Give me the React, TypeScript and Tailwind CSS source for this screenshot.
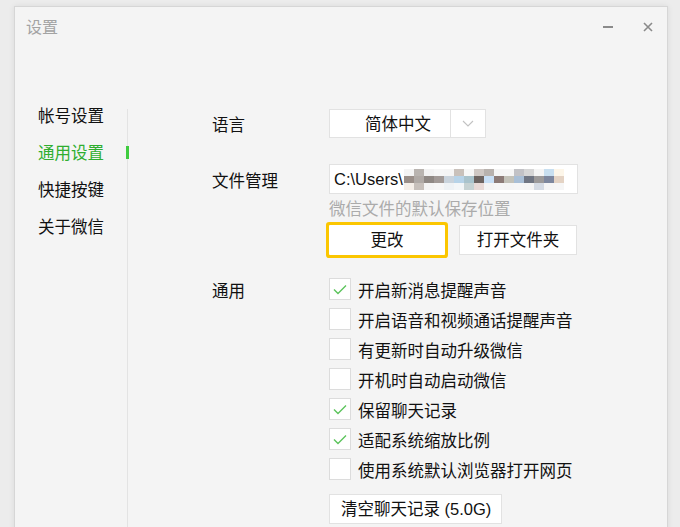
import React from 'react';

const FONT = '"Liberation Sans", "Noto Sans CJK SC", sans-serif';

const navItems = ['帐号设置', '通用设置', '快捷按键', '关于微信'];

const options = [
  { label: '开启新消息提醒声音', checked: true },
  { label: '开启语音和视频通话提醒声音', checked: false },
  { label: '有更新时自动升级微信', checked: false },
  { label: '开机时自动启动微信', checked: false },
  { label: '保留聊天记录', checked: true },
  { label: '适配系统缩放比例', checked: true },
  { label: '使用系统默认浏览器打开网页', checked: false },
];

// blurred user name after C:\Users\
const mosaic = [
  ['#f4f4f4', '#b9b4b0', '#f2f2f2', '#f6f6f6', '#f5f5f5', '#c9c1bb', '#f7f7f7', '#cfc8c4', '#b8b2ae', '#f5f5f5', '#f6f6f6', '#c2c2c6', '#d6d6d6', '#f5f5f5', '#c8dff0', '#fdf6e9'],
  ['#9a8f89', '#b0aaa6', '#8f8884', '#a29a97', '#c9d3dc', '#b7d3e8', '#a9c3cc', '#6d6461', '#c8dff5', '#8c7b77', '#c3c2b9', '#a9bfd6', '#707683', '#9c9a9a', '#7d879e', '#e4d3c4'],
  ['#f5efe9', '#c7c0bb', '#f4f4f4', '#f6f6f6', '#eef2f5', '#f3f6f8', '#c6d2d3', '#e8d9d6', '#f4f4f4', '#f6f6f6', '#f5f5f5', '#f6f6f6', '#f5f5f5', '#d5dbe4', '#f5f5f5', '#f6f6f6'],
];

function Check() {
  return (
    <svg width="14" height="11" viewBox="0 0 14 11" fill="none">
      <path d="M1 5.5 L5 9.5 L13 1.5" stroke="#5cc45c" strokeWidth="1.4" />
    </svg>
  );
}

export default function App() {
  return (
    <div className="h-[527px] w-[680px] overflow-hidden bg-[#ececec] pt-[6px] pl-[14px]" style={{ fontFamily: FONT }}>
      <div className="h-[560px] w-[654px] border border-[#d6d6d6] bg-[#f4f4f4] shadow-[0_0_6px_rgba(0,0,0,0.08)]">
        {/* title bar */}
        <div className="flex h-[40px] items-center">
          <span className="pl-[11px] pt-[2px] text-[16px] text-[#a3a3a3]">设置</span>
          <div className="ml-auto flex items-center">
            <div className="h-[1.5px] w-[10px] bg-[#8a8a8a]" />
            <svg className="ml-[30px] mr-[14px]" width="10" height="10" viewBox="0 0 10 10">
              <path d="M1 1 L9 9 M9 1 L1 9" stroke="#8a8a8a" strokeWidth="1.6" />
            </svg>
          </div>
        </div>

        <div className="flex">
          {/* sidebar */}
          <div className="mt-[62px] h-[440px] w-[113px] border-r border-[#e3e3e3]">
            <div className="-mt-[12px] pl-[23px]">
              {navItems.map((item, i) => (
                <div key={item} className="relative flex h-[37px] items-center">
                  <span className={`pt-[2px] text-[16.5px] ${i === 1 ? 'text-[#2fae2f]' : 'text-[#111]'}`}>{item}</span>
                  {i === 1 && <div className="absolute right-[-2px] h-[13px] w-[3px] bg-[#3fcc3f]" />}
                </div>
              ))}
            </div>
          </div>

          {/* main */}
          <div className="pl-[84px] pt-[62px] text-[16.5px] text-[#111]">
            <div className="flex items-center">
              <div className="w-[117px] pt-[3px]">语言</div>
              <div className="flex h-[29px] w-[157px] border border-[#e2e2e2] bg-white">
                <div className="flex flex-1 items-center pl-[35px] pt-[2px]">简体中文</div>
                <div className="flex w-[35px] items-center justify-center border-l border-[#e2e2e2]">
                  <svg width="12" height="7" viewBox="0 0 12 7" fill="none">
                    <path d="M1 1 L6 6 L11 1" stroke="#c2c2c2" strokeWidth="1.1" />
                  </svg>
                </div>
              </div>
            </div>

            <div className="mt-[26px] flex">
              <div className="flex h-[30px] w-[117px] items-center pt-[4px]">文件管理</div>
              <div>
                <div className="flex h-[30px] w-[249px] items-center border border-[#e2e2e2] bg-white pl-[4px]">
                  <span className="pt-[1px] text-[16.5px]">C:\Users\</span>
                  <svg width="160" height="21" viewBox="0 0 160 21" className="ml-[1px]">
                    {mosaic.map((row, r) =>
                      row.map((c, k) => <rect key={`${r}-${k}`} x={k * 10} y={r * 7} width="10" height="7" fill={c} />)
                    )}
                  </svg>
                </div>
                <div className="mt-[4px] h-[20px] pt-[1px] leading-[20px] text-[#ababab]">微信文件的默认保存位置</div>
                <div className="mt-[7px] flex">
                  <button className="h-[30px] w-[116px] rounded-[1px] bg-white pt-[1px] text-[#111] ring-[3px] ring-[#fbc600]">更改</button>
                  <button className="ml-[14px] h-[30px] w-[118px] border border-[#e2e2e2] bg-white pt-[1px] text-[#111]">打开文件夹</button>
                </div>
              </div>
            </div>

            <div className="mt-[19px] flex">
              <div className="flex h-[30px] w-[117px] items-center pt-[4px]">通用</div>
              <div>
                {options.map((o) => (
                  <div key={o.label} className="flex h-[30px] items-center">
                    <div className="flex h-[22px] w-[22px] items-center justify-center border border-[#dcdcdc] bg-white">
                      {o.checked && <Check />}
                    </div>
                    <span className="ml-[7px] pt-[4px]">{o.label}</span>
                  </div>
                ))}
                <button className="mt-[10px] h-[30px] w-[173px] border border-[#e2e2e2] bg-white pl-[11px] pt-[1px] text-left text-[#111]">
                  清空聊天记录 (5.0G)
                </button>
              </div>
            </div>
          </div>
        </div>
      </div>
    </div>
  );
}
